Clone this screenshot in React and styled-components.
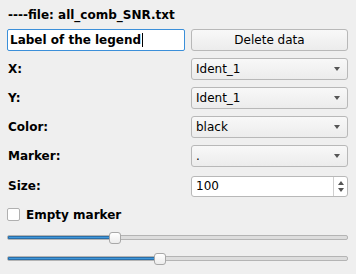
import React from 'react';
import styled, { createGlobalStyle } from 'styled-components';

const GlobalStyle = createGlobalStyle`
  html, body {
    margin: 0;
    padding: 0;
    background: #efefef;
  }
  body {
    font-family: "DejaVu Sans", "Liberation Sans", sans-serif;
    font-size: 12px;
    color: #000;
  }
`;

const Panel = styled.div`
  width: 356px;
  height: 274px;
  box-sizing: border-box;
  padding: 8px 8px 0 7px;
  display: grid;
  grid-template-columns: 178px 157px;
  column-gap: 6px;
  grid-auto-rows: auto;
`;

const Title = styled.div`
  grid-column: 1 / 3;
  font-weight: bold;
  height: 14px;
  line-height: 14px;
  padding-left: 1px;
  margin-bottom: 7px;
`;

const Label = styled.div`
  font-weight: bold;
  display: flex;
  align-items: center;
  padding-left: 1px;
  height: 22px;
  margin-bottom: 7px;
`;

const LineEdit = styled.div`
  height: 22px;
  box-sizing: border-box;
  border: 1px solid #3b8fd9;
  border-radius: 2px;
  background: #fff;
  display: flex;
  align-items: center;
  padding-left: 2px;
  font-weight: bold;
  margin-bottom: 7px;
`;

const Caret = styled.span`
  display: inline-block;
  width: 1px;
  height: 14px;
  background: #000;
  margin-left: 1px;
`;

const Button = styled.div`
  height: 22px;
  box-sizing: border-box;
  border: 1px solid #b8b8b8;
  border-radius: 3px;
  background: linear-gradient(#f8f8f8, #ececec);
  display: flex;
  align-items: center;
  justify-content: center;
  margin-bottom: 7px;
`;

const Combo = styled.div`
  height: 22px;
  box-sizing: border-box;
  border: 1px solid #b8b8b8;
  border-radius: 3px;
  background: linear-gradient(#f8f8f8, #ececec);
  display: flex;
  align-items: center;
  padding: 0 7px 0 4px;
  margin-bottom: 7px;
`;

const ComboText = styled.span`
  flex: 1;
`;

const Arrow = styled.span`
  width: 0;
  height: 0;
  border-left: 3px solid transparent;
  border-right: 3px solid transparent;
  border-top: 4px solid #555;
`;

const Spin = styled.div`
  height: 21px;
  box-sizing: border-box;
  border: 1px solid #b8b8b8;
  border-radius: 3px;
  background: #fff;
  display: flex;
  align-items: stretch;
  margin-top: 1px;
  margin-bottom: 11px;
`;

const SpinText = styled.span`
  flex: 1;
  display: flex;
  align-items: center;
  padding-left: 4px;
`;

const SpinButtons = styled.div`
  width: 13px;
  border-left: 1px solid #cfcfcf;
  display: flex;
  flex-direction: column;
  align-items: center;
  justify-content: center;
  gap: 3px;
`;

const Tri = styled.span`
  width: 0;
  height: 0;
  border-left: 3px solid transparent;
  border-right: 3px solid transparent;
  ${p => p.$up ? 'border-bottom: 4px solid #555;' : 'border-top: 4px solid #555;'}
`;

const CheckRow = styled.div`
  grid-column: 1 / 3;
  display: flex;
  align-items: center;
  gap: 6px;
  font-weight: bold;
  height: 14px;
  margin-bottom: 10px;
`;

const Box = styled.span`
  width: 13px;
  height: 13px;
  box-sizing: border-box;
  border: 1px solid #b0b0b0;
  border-radius: 2px;
  background: #fff;
`;

const SliderRow = styled.div`
  grid-column: 1 / 3;
  position: relative;
  height: 12px;
  margin-bottom: 9px;
  display: flex;
  align-items: center;
`;

const Groove = styled.div`
  width: 100%;
  height: 5px;
  box-sizing: border-box;
  border: 1px solid #b4b4b4;
  border-radius: 2px;
  background: #dddddd;
  display: flex;
  overflow: hidden;
`;

const Fill = styled.div`
  height: 100%;
  background: linear-gradient(#4ea6e6, #3188cf);
  box-shadow: inset 0 0 0 1px #2b6fa8;
`;

const Handle = styled.div`
  position: absolute;
  top: 0;
  width: 12px;
  height: 12px;
  box-sizing: border-box;
  border: 1px solid #a8a8a8;
  border-radius: 3px;
  background: linear-gradient(#ffffff, #ececec);
`;

const Slider = ({ value }) => {
  const x = Math.round(value * 329);
  return (
    <SliderRow>
      <Groove>
        <Fill style={{ width: x + 6 }} />
      </Groove>
      <Handle style={{ left: x }} />
    </SliderRow>
  );
};

const ComboBox = ({ text }) => (
  <Combo>
    <ComboText>{text}</ComboText>
    <Arrow />
  </Combo>
);

export default function App() {
  return (
    <>
      <GlobalStyle />
      <Panel>
        <Title>----file: all_comb_SNR.txt</Title>
        <LineEdit>Label of the legend<Caret /></LineEdit>
        <Button>Delete data</Button>
        <Label>X:</Label>
        <ComboBox text="Ident_1" />
        <Label>Y:</Label>
        <ComboBox text="Ident_1" />
        <Label>Color:</Label>
        <ComboBox text="black" />
        <Label>Marker:</Label>
        <ComboBox text="." />
        <Label>Size:</Label>
        <Spin>
          <SpinText>100</SpinText>
          <SpinButtons>
            <Tri $up />
            <Tri />
          </SpinButtons>
        </Spin>
        <CheckRow>
          <Box />
          Empty marker
        </CheckRow>
        <Slider value={0.31} />
        <Slider value={0.448} />
      </Panel>
    </>
  );
}
